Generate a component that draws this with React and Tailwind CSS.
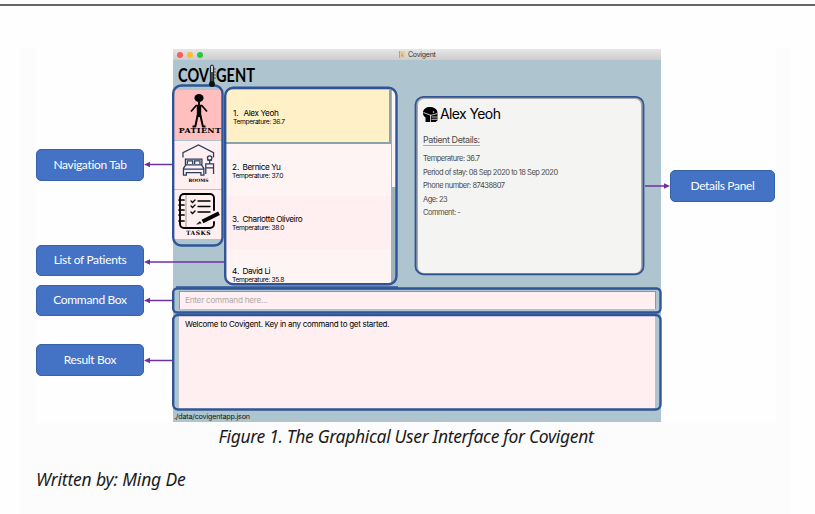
import React from 'react';

const patients = [
  { id: '1.', name: 'Alex Yeoh', temp: '36.7', row: 'h-[54px] bg-[#fff0c8] border-r-2 border-b-2 border-[#8aa3a8] pl-[7px] pt-[17px]' },
  { id: '2.', name: 'Bernice Yu', temp: '37.0', row: 'h-[52px] bg-[#fff4f4] pl-[6px] pt-[17px]' },
  { id: '3.', name: 'Charlotte Oliveiro', temp: '38.0', row: 'h-[53px] bg-[#ffeff0] pl-[6px] pt-[17px]' },
  { id: '4.', name: 'David Li', temp: '35.8', row: 'h-[35px] bg-[#fff4f4] pl-[6px] pt-[16px]' },
];

const details = [
  'Temperature: 36.7',
  'Period of stay: 08 Sep 2020 to 18 Sep 2020',
  'Phone number: 87438807',
  'Age: 23',
  'Comment: -',
];

function Callout({ children, className }) {
  return (
    <div className={`flex shrink-0 items-center justify-center whitespace-nowrap rounded-[5px] border border-[#3862a8] bg-[#4472c4] pb-px font-['Lato',sans-serif] text-[12px] tracking-[-0.33px] text-white ${className}`}>
      {children}
    </div>
  );
}

function Logo() {
  return (
    <div className="relative z-10 flex h-[27px] items-start pl-[5px] pt-[5px] font-['Lato',sans-serif] text-[18px] font-bold leading-[20px] text-black">
      <span className="w-[31px] origin-left scale-x-[.81]">COV</span>
      <svg className="-mt-[1px] h-[24px] w-[6px] shrink-0 overflow-visible" viewBox="0 0 6 24">
        <path d="M1.400 18V2.700a1.600 1.600 0 0 1 3.200 0V18" fill="#c4d2d8" stroke="#111" strokeWidth="1" />
        <path d="M3 8v11" stroke="#111" strokeWidth="1.400" />
        <path d="M5.200 5h1.500M5.200 8h1.500M5.200 11h1.500M5.200 14h1.500" stroke="#111" strokeWidth=".8" />
        <circle cx="3" cy="20" r="3" fill="#111" />
      </svg>
      <span className="ml-px origin-left scale-x-[.81]">GENT</span>
    </div>
  );
}

function PersonIcon() {
  return (
    <svg className="h-[34px] w-[24px] shrink-0" viewBox="0 0 24 34" fill="none" stroke="#000" strokeLinejoin="round">
      <ellipse cx="12" cy="4" rx="4.600" ry="4" fill="#000" stroke="none" />
      <path d="M12 8v4" strokeWidth="1.800" />
      <path d="M4 17.500 9 11.700h6l5 5.800" strokeWidth="1.700" />
      <path d="M9.800 11h4.400v12H9.800z" fill="#000" stroke="none" />
      <path d="M10.700 21 8.300 32.500H5.500M13.300 21l2.600 11.500h2.600" strokeWidth="2" />
    </svg>
  );
}

function RoomIcon() {
  return (
    <svg className="h-[33px] w-[35px]" viewBox="0 0 36 34" fill="none" stroke="#263f5c" strokeWidth="1.300">
      <path d="M2 14V9L18 1l15.500 8v5" />
      <path d="M4.500 22v-6.500h17V22M6.500 20.500v-3.200h5.500v3.200M14 20.500v-3.200h5.500v3.200M2.500 32v-7l2.500-3.500h16L23.500 25v7h-3v-2.500H5.500V32zM2.500 26h21" />
      <path d="M25.500 31V20.500h8V31M25.500 24.500h8M29.500 20.500v-4M27 16.500h5" />
      <circle cx="29.500" cy="14.500" r="2.300" />
    </svg>
  );
}

function TaskIcon() {
  return (
    <svg className="h-[36px] w-[42px]" viewBox="0 0 42 36" fill="none" stroke="#000" strokeLinecap="round">
      <path d="M36 17V5a4 4 0 0 0-4-4H6a4 4 0 0 0-4 4v26a4 4 0 0 0 4 4h26a4 4 0 0 0 4-4v-2" strokeWidth="1.900" />
      <path d="M8 2v32" stroke="#777" strokeWidth=".7" />
      <path d="M1 7h5M1 12h5M1 17h5M1 22h5M1 28h5" strokeWidth="1.700" />
      <path d="m13 8 1.500 1.500L17 7M13 13l1.500 1.500L17 12M13 19l1.500 1.500L17 18M20 8h12M20 13.500h12M20 19h12" strokeWidth="1.300" />
      <path d="M24.500 28.500 41 20.300" strokeWidth="3.800" strokeLinecap="butt" />
      <path d="m19 31 3-2.500 1 1.500z" fill="#000" strokeWidth=".5" />
    </svg>
  );
}

function MaskIcon() {
  return (
    <svg className="h-[15px] w-[15px] shrink-0" viewBox="0 0 15 15">
      <path d="M2.500 15V10.500C.5 9.500 0 7.500 0 5.500 0 2 3.300 0 7 0c4.500 0 7.500 2.500 7.500 6v7.500L12.500 15z" fill="#000" />
      <path d="M.5 5.500 8 8.300 14.500 6.500M8.500 10h6M8.500 12.300h6M7.500 8v7" fill="none" stroke="#f4f4f2" strokeWidth=".8" />
      <circle cx="10.500" cy="5" r=".8" fill="#f4f4f2" />
    </svg>
  );
}

function NavTab({ label, children, className }) {
  return (
    <div className={`flex flex-col items-center overflow-hidden ${className}`}>
      {children}
      {label}
    </div>
  );
}

function AppWindow() {
  return (
    <div className="mt-px flex h-[373px] w-[488px] shrink-0 flex-col overflow-hidden bg-[#aec4cf] font-['Inter',sans-serif]">
      <div className="flex h-[11px] shrink-0 items-center bg-gradient-to-b from-[#e6e6e6] to-[#cdcdcd] pl-[4px]">
        <span className="mr-[4px] h-[6px] w-[6px] rounded-full bg-[#fc5b57]" />
        <span className="mr-[4px] h-[6px] w-[6px] rounded-full bg-[#fdbc2e]" />
        <span className="h-[6px] w-[6px] rounded-full bg-[#28c840]" />
        <svg className="ml-[196px] h-[7px] w-[6px]" viewBox="0 0 6 7">
          <path d="M0 0h6v7H0z" fill="#e7cda6" />
          <path d="M.5 0v7M3 2v3M2 5h3" stroke="#a98b69" strokeWidth=".7" />
        </svg>
        <span className="ml-[3px] pt-px text-[7px] tracking-[-0.25px] text-[#333]">Covigent</span>
      </div>
      <Logo />
      <div className="flex h-[199px] shrink-0">
        <div className="ml-px mt-[3px] flex w-[49px] flex-col gap-px">
          <NavTab className="h-[50px] bg-[#ffbfbf] pt-[4px]" label={<span className="-mt-[2px] ml-[3px] whitespace-nowrap font-['DejaVu_Serif',serif] text-[8px] font-bold leading-[9px] tracking-[0.3px] text-black">PATIENT</span>}>
            <PersonIcon />
          </NavTab>
          <NavTab className="h-[48px] bg-[#ffeff0] pt-[3px]" label={<span className="font-['DejaVu_Serif',serif] text-[4.5px] font-bold leading-[8px] text-black">ROOMS</span>}>
            <RoomIcon />
          </NavTab>
          <NavTab className="h-[49px] bg-[#ffeff0] pt-[3px]" label={<span className="font-['DejaVu_Serif',serif] text-[6px] font-bold leading-[7px] tracking-[0.5px] text-black">TASKS</span>}>
            <TaskIcon />
          </NavTab>
        </div>
        <div className="ml-[3px] mt-[3px] flex h-[195px] w-[170px] overflow-hidden rounded-b-[7px]">
          <div className="w-[165px]">
            {patients.map((p) => (
              <div key={p.id} className={`overflow-hidden whitespace-nowrap ${p.row}`}>
                <div className="flex text-[8.2px] leading-[12px] tracking-[-0.4px] text-black">
                  <span className="w-[10.500px] tracking-[-0.1px]">{p.id}</span>
                  <span>{p.name}</span>
                </div>
                <div className="text-[6.7px] leading-[6px] tracking-[-0.35px] text-black">Temperature: {p.temp}</div>
              </div>
            ))}
          </div>
          <div className="w-[5px] bg-[#9db4ba]">
            <div className="h-[97px] w-[5px] rounded-tr-[6px] border-l border-[#9db4ba] bg-[#fff4f4]" />
          </div>
        </div>
        <div className="ml-[20px] mt-[10px] h-[178px] w-[227px] whitespace-nowrap rounded-[8px] border-2 border-[#aaa] bg-[#f4f4f2] pl-[5px] pt-[6px] text-[#4b4b4b]">
          <div className="flex items-center gap-[2px] text-[14px] leading-[18px] tracking-[-0.6px] text-black">
            <MaskIcon />
            <span>Alex Yeoh</span>
          </div>
          <div className="mt-[12px] w-fit border-b border-[#aaa] text-[9px] leading-[10px] tracking-[-0.42px]">Patient Details:</div>
          <div className="mt-[6px] text-[7.5px] leading-[13.5px] tracking-[-0.48px]">
            {details.map((d) => <div key={d}>{d}</div>)}
          </div>
        </div>
      </div>
      <div className="ml-[6px] mt-[5px] flex h-[18px] w-[477px] shrink-0 items-center border-x border-t border-[#8c9a9c] bg-[#ffeff0] pl-[5px] text-[8.2px] tracking-[-0.25px] text-[#b2a8aa]">
        Enter command here...
      </div>
      <div className="ml-[6px] mt-[7px] h-[93px] w-[476px] shrink-0 bg-[#ffeff0] pl-[6px] pt-[2px] text-[8px] leading-[12px] tracking-[-0.27px] text-black">
        Welcome to Covigent. Key in any command to get started.
      </div>
      <div className="pl-[1px] pt-[3px] text-[7.2px] leading-[9px] tracking-[-0.2px] text-[#111]">./data/covigentapp.json</div>
    </div>
  );
}

function Annotations() {
  return (
    <svg className="pointer-events-none absolute left-0 top-0 h-[514px] w-[815px]" viewBox="0 0 815 514" fill="none">
      <g stroke="#2f5597" strokeWidth="2.400">
        <rect x="173.200" y="85.500" width="49.300" height="160" rx="8" />
        <rect x="225.200" y="87.700" width="171.300" height="196.500" rx="8" />
        <rect x="415.500" y="96.800" width="228" height="177.500" rx="8" strokeWidth="1.800" />
        <rect x="173.200" y="288.500" width="487.300" height="24" rx="4" />
        <rect x="173.200" y="315" width="487.300" height="94.500" rx="5" />
        <path d="M176 287h222" strokeWidth="1.500" />
      </g>
      <g stroke="#7030a0" strokeWidth="1.500">
        <path d="M148 164.500h24M148 262h76M148 300.500h24M148 360.500h24M645 186h21" />
      </g>
      <g fill="#7030a0">
        <path d="M144 164.500l6-2.700v5.400zM144 262l6-2.700v5.400zM144 300.500l6-2.700v5.400zM144 360.500l6-2.700v5.400zM670 186l-6-2.700v5.400z" />
      </g>
    </svg>
  );
}

export default function App() {
  return (
    <div className="relative h-[514px] w-[815px] overflow-hidden bg-[#fefefe]">
      <div className="h-[4px]" />
      <div className="h-[2px] bg-[#666]" />
      <div className="ml-[20px] mt-[42px] h-[466px] w-[771px] bg-[#fcfcfc] pl-[16px]">
        <div className="flex h-[375px] w-[740px] bg-[#fefefe]">
          <div className="flex w-[137px] shrink-0 flex-col pt-[101px]">
            <Callout className="h-[32px] w-[108px]">Navigation Tab</Callout>
            <Callout className="mt-[64px] h-[31px] w-[108px]">List of Patients</Callout>
            <Callout className="mt-[9px] h-[31px] w-[108px]">Command Box</Callout>
            <Callout className="mt-[28px] h-[32px] w-[108px]">Result Box</Callout>
          </div>
          <AppWindow />
          <div className="pl-[9px] pt-[122px]">
            <Callout className="h-[32px] w-[105px]">Details Panel</Callout>
          </div>
        </div>
        <div className="w-[740px] whitespace-nowrap font-['Noto_Sans',sans-serif] text-[17.5px] italic leading-[26px] text-[#1b1b1b]">
          <p className="text-center tracking-[-0.33px]">Figure 1. The Graphical User Interface for Covigent</p>
          <p className="mt-[17px] tracking-[-0.17px]">Written by: Ming De</p>
        </div>
      </div>
      <Annotations />
    </div>
  );
}
